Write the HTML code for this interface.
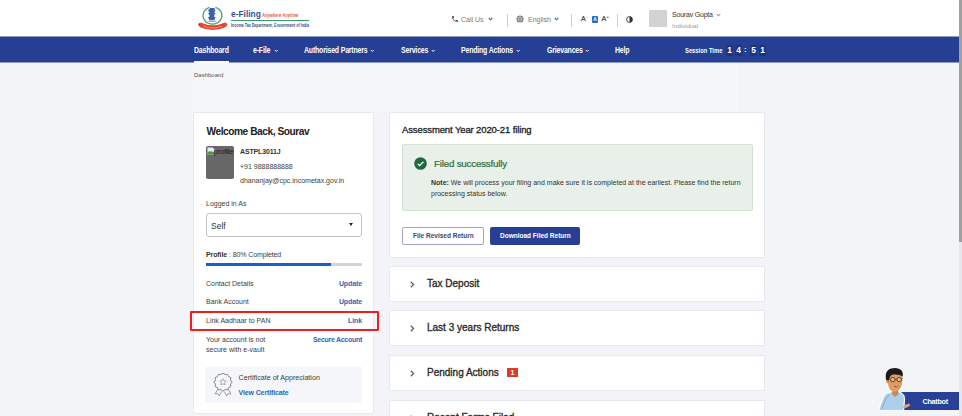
<!DOCTYPE html>
<html><head><meta charset="utf-8">
<style>
*{margin:0;padding:0;box-sizing:border-box}
html,body{width:962px;height:416px;overflow:hidden}
body{background:#f3f4f8;font-family:"Liberation Sans",sans-serif;position:relative;color:#333}
.a{position:absolute;white-space:nowrap}
#hdr{position:absolute;left:0;top:0;width:962px;height:36px;background:#fff}
#nav{position:absolute;left:0;top:36px;width:960px;height:27px;background:linear-gradient(to bottom,#929fc9 0,#929fc9 1px,#253f94 1px,#253f94 26px,#8c99c6 26px,#8c99c6 27px)}
.nv{position:absolute;top:46px;color:#fff;font-size:8.5px;font-weight:bold;line-height:9px;letter-spacing:-0.2px;transform:scaleX(0.815);transform-origin:0 0}
.ch{position:absolute;width:4px;height:4px;border-right:1px solid currentColor;border-bottom:1px solid currentColor;transform:rotate(45deg)}
.card{position:absolute;background:#fff;border:1px solid #e7e9ef;border-radius:1px}
.t7{font-size:7px;line-height:8px;color:#3d3d3d}
.lnk{color:#2c68b2;font-weight:bold;font-size:7px;line-height:8px;letter-spacing:-0.1px}
.acc{position:absolute;left:389px;width:376px;height:36px;background:#fff;border:1px solid #e7e9ef}
.acc .tt{position:absolute;left:37px;top:11px;font-size:10px;line-height:12px;color:#2b2b2b;-webkit-text-stroke:0.35px #2b2b2b}
.acc .ar{position:absolute;left:20px;top:14px;width:5px;height:7px}
.digit{position:absolute;top:45px;width:7px;height:10.5px;background:#1d347f;color:#fff;font-size:8.5px;font-weight:bold;line-height:11px;text-align:center}
</style></head><body>
<div id="hdr"></div>

<!-- logo -->
<svg class="a" style="left:194px;top:3px" width="40" height="30" viewBox="0 0 40 30">
  <path d="M15.6 4.3 A9.4 8.6 0 1 0 21.4 4.3" fill="none" stroke="#44a070" stroke-width="1.3"/>
  <path d="M16.2 5 h4.6 l-0.4 1.5 h0.8 v2 h-0.8 v1.5 h1 l-0.4 1.6 h-0.8 v2.4 h1.2 v1.6 h-0.8 v1.6 h-5.6 v-1.6 h-0.8 v-1.6 h1.2 v-2.4 h-0.8 l-0.4-1.6 h1 v-1.5 h-0.8 v-2 h0.8 z" fill="#3a62ae"/>
  <path d="M14.5 17.8 h8 v1 h-8z" fill="#7a90b8"/>
  <path d="M6.5 19.5 Q18.5 25 31 19.5 L32 24 Q18.5 30 5.5 24 Z" fill="#e2452f"/>
  <path d="M6.5 19.5 L4 21 L5.5 24 Z M31 19.5 L33.5 21 L32 24 Z" fill="#c5301f"/>
  <path d="M9.5 23 Q18.5 26.8 28 23" fill="none" stroke="#f6c9bf" stroke-width="0.9" stroke-dasharray="1.2 0.6"/>
</svg>
<div class="a" id="lg1" style="left:231px;top:9px;font-size:8.4px;line-height:10px;color:#3a5196;font-weight:bold">e-Filing</div>
<div class="a" id="lg2" style="left:262px;top:12.5px;font-size:4.6px;line-height:6px;color:#e65a44;font-style:italic;font-weight:bold;transform:scaleX(0.88);transform-origin:0 0">Anywhere Anytime</div>
<div class="a" style="left:231px;top:20px;width:78px;height:1.2px;background:#3e9c6b"></div>
<div class="a" id="lg3" style="left:231px;top:21.5px;font-size:5px;line-height:6px;color:#33508f;font-weight:bold;transform:scaleX(0.725);transform-origin:0 0">Income Tax Department, Government of India</div>

<!-- header right -->
<svg class="a" style="left:451px;top:15px" width="8" height="8" viewBox="0 0 24 24"><path fill="#555" d="M6.6 10.8c1.4 2.8 3.8 5.1 6.6 6.6l2.2-2.2c.3-.3.7-.4 1-.2 1.1.4 2.3.6 3.6.6.6 0 1 .4 1 1V20c0 .6-.4 1-1 1C10.6 21 3 13.4 3 4c0-.6.4-1 1-1h3.5c.6 0 1 .4 1 1 0 1.2.2 2.4.6 3.6.1.3 0 .7-.2 1L6.6 10.8z"/></svg>
<div class="a" style="left:461px;top:15px;font-size:7px;line-height:9px;color:#777">Call Us</div>
<svg class="a" style="left:487.5px;top:17px" width="5" height="4" viewBox="0 0 5 4"><path d="M0.7 1 L2.5 2.8 L4.3 1" fill="none" stroke="#666" stroke-width="1.1"/></svg>
<div class="a" style="left:507px;top:14px;width:1px;height:13px;background:#d0d0d0"></div>
<svg class="a" style="left:516px;top:15px" width="8" height="8" viewBox="0 0 16 16"><circle cx="8" cy="8" r="7" fill="#666"/><ellipse cx="8" cy="8" rx="2.6" ry="6.6" fill="none" stroke="#fff" stroke-width="1"/><path d="M1.5 6h13M1.5 10h13" stroke="#fff" stroke-width="1"/></svg>
<div class="a" style="left:528px;top:15px;font-size:7px;line-height:9px;color:#777">English</div>
<svg class="a" style="left:554px;top:17px" width="5" height="4" viewBox="0 0 5 4"><path d="M0.7 1 L2.5 2.8 L4.3 1" fill="none" stroke="#666" stroke-width="1.1"/></svg>
<div class="a" style="left:571px;top:14px;width:1px;height:13px;background:#d0d0d0"></div>
<div class="a" style="left:581px;top:15px;font-size:7px;line-height:8px;color:#444;-webkit-text-stroke:0.25px #444">A</div>
<div class="a" style="left:586px;top:14.5px;font-size:4px;line-height:4px;color:#444;font-weight:bold">-</div>
<div class="a" style="left:592px;top:16px;width:6px;height:6.5px;background:#1f6fd1;border-radius:1px;color:#fff;font-size:5px;line-height:6.5px;text-align:center;font-weight:bold">A</div>
<div class="a" style="left:601.5px;top:15px;font-size:7px;line-height:8px;color:#444;-webkit-text-stroke:0.25px #444">A</div>
<div class="a" style="left:606.5px;top:14.5px;font-size:4px;line-height:4px;color:#444;font-weight:bold">+</div>
<div class="a" style="left:617px;top:14px;width:1px;height:13px;background:#d0d0d0"></div>
<svg class="a" style="left:626px;top:16px" width="7" height="7" viewBox="0 0 14 14"><circle cx="7" cy="7" r="5.8" fill="none" stroke="#333" stroke-width="1.8"/><path d="M7 1.2 A5.8 5.8 0 0 1 7 12.8 Z" fill="#333"/></svg>
<div class="a" style="left:649px;top:10px;width:18px;height:17px;background:#d3d3d3;border-radius:1px"></div>
<div class="a" style="left:672px;top:10px;font-size:7px;line-height:9px;color:#333;letter-spacing:-0.2px">Sourav Gupta</div>
<svg class="a" style="left:715.5px;top:13px" width="5" height="4" viewBox="0 0 5 4"><path d="M0.7 1 L2.5 2.8 L4.3 1" fill="none" stroke="#555" stroke-width="0.9"/></svg>
<div class="a" style="left:672px;top:21.8px;font-size:6.2px;line-height:7px;color:#9a9a9a">Individual</div>

<!-- nav -->
<div id="nav"></div>
<div class="nv" style="left:194px">Dashboard</div>
<div class="a" style="left:194px;top:61px;width:35px;height:2px;background:#fff"></div>
<div class="nv" style="left:253px">e-File</div>
<div class="nv" style="left:304px">Authorised Partners</div>
<div class="nv" style="left:401px">Services</div>
<div class="nv" style="left:461px">Pending Actions</div>
<div class="nv" style="left:547px">Grievances</div>
<div class="nv" style="left:615px">Help</div>
<svg class="a" style="left:274px;top:49px" width="5" height="4" viewBox="0 0 5 4"><path d="M0.7 1 L2.2 2.5 L3.7 1" fill="none" stroke="#fff" stroke-width="1"/></svg>
<svg class="a" style="left:370px;top:49px" width="5" height="4" viewBox="0 0 5 4"><path d="M0.7 1 L2.2 2.5 L3.7 1" fill="none" stroke="#fff" stroke-width="1"/></svg>
<svg class="a" style="left:431px;top:49px" width="5" height="4" viewBox="0 0 5 4"><path d="M0.7 1 L2.2 2.5 L3.7 1" fill="none" stroke="#fff" stroke-width="1"/></svg>
<svg class="a" style="left:516px;top:49px" width="5" height="4" viewBox="0 0 5 4"><path d="M0.7 1 L2.2 2.5 L3.7 1" fill="none" stroke="#fff" stroke-width="1"/></svg>
<svg class="a" style="left:585px;top:49px" width="5" height="4" viewBox="0 0 5 4"><path d="M0.7 1 L2.2 2.5 L3.7 1" fill="none" stroke="#fff" stroke-width="1"/></svg>

<div class="a" style="left:685px;top:46px;color:#fff;font-size:7.5px;line-height:9px;font-weight:bold;transform:scaleX(0.775);transform-origin:0 0">Session Time</div>
<div class="digit" style="left:726px">1</div>
<div class="digit" style="left:735px">4</div>
<div class="a" style="left:744px;top:45px;color:#fff;font-size:8px;font-weight:bold;line-height:10px">:</div>
<div class="digit" style="left:750px">5</div>
<div class="digit" style="left:759px">1</div>

<!-- breadcrumb -->
<div class="a" style="left:193px;top:63px;width:545px;height:49px;background:#f5f6f9"></div>
<div class="a" style="left:194px;top:71px;font-size:6px;line-height:8px;color:#555">Dashboard</div>

<!-- left card -->
<div class="card" style="left:193px;top:112px;width:181px;height:302px"></div>
<div class="a" style="left:206.5px;top:126px;font-size:10.2px;line-height:12px;color:#222;font-weight:bold;letter-spacing:-0.46px">Welcome Back, Sourav</div>
<div class="a" style="left:206px;top:146px;width:28px;height:33px;background:#676767;border-radius:2px;overflow:hidden"></div>
<svg class="a" style="left:206.5px;top:147px" width="8" height="8" viewBox="0 0 8 8"><path d="M0.5 0.5 h5 l2 2 v5 h-7z" fill="#e9eef5" stroke="#aab" stroke-width="0.5"/><path d="M0.5 7.5 L0.5 5 Q3 3.5 7.5 5.5 V7.5Z" fill="#4d9a3c"/></svg>
<div class="a" style="left:213.5px;top:147px;font-size:8px;line-height:9px;color:#1e1e1e;letter-spacing:-0.3px">profile</div>
<div class="a" style="left:240px;top:148px;font-size:7px;line-height:8px;color:#333;font-weight:bold;letter-spacing:-0.15px">ASTPL3011J</div>
<div class="a" style="left:240px;top:162.7px;font-size:7px;line-height:8px;color:#3d3d3d">+91 9888888888</div>
<div class="a" style="left:240px;top:177px;font-size:7px;line-height:8px;color:#3d3d3d">dhananjay@cpc.incometax.gov.in</div>
<div class="a" style="left:206px;top:200px;font-size:7px;line-height:8px;color:#3d3d3d">Logged in As</div>
<div class="a" style="left:206px;top:213px;width:156px;height:24px;border:1px solid #c2c2c2;border-radius:3px;background:#fff"></div>
<div class="a" style="left:211px;top:220.5px;font-size:8.5px;line-height:10px;color:#333">Self</div>
<div class="a" style="left:349px;top:223px;width:0;height:0;border-left:2.5px solid transparent;border-right:2.5px solid transparent;border-top:3px solid #222"></div>

<div class="a" style="left:206px;top:250.5px;font-size:7px;line-height:8px;color:#3d3d3d;letter-spacing:-0.1px"><b style="color:#333">Profile</b> : 80% Completed</div>
<div class="a" style="left:206px;top:263px;width:156px;height:3px;background:#d4d4d4"></div>
<div class="a" style="left:206px;top:263px;width:125px;height:3px;background:#1a5fc9"></div>

<div class="a t7" style="left:206px;top:280px">Contact Details</div>
<div class="a lnk" style="right:600px;top:279.5px">Update</div>
<div class="a t7" style="left:206px;top:298px">Bank Account</div>
<div class="a lnk" style="right:600px;top:297.5px">Update</div>
<div class="a" style="left:190px;top:311px;width:189px;height:20px;border:2px solid #f21b20;border-radius:1px"></div>
<div class="a t7" style="left:206px;top:316.6px">Link Aadhaar to PAN</div>
<div class="a lnk" style="right:600px;top:316.5px">Link</div>
<div class="a t7" style="left:206px;top:335.6px">Your account is not</div>
<div class="a t7" style="left:206px;top:345.8px">secure with e-vault</div>
<div class="a lnk" style="right:600px;top:335.5px;letter-spacing:-0.28px">Secure Account</div>

<div class="a" style="left:205px;top:367px;width:157px;height:36px;background:#f5f6f9"></div>
<svg class="a" style="left:213px;top:372px" width="20" height="24" viewBox="0 0 20 24">
  <path d="M10 1 l2 1.6 2.5-.3 1 2.3 2.3 1 -.3 2.5 1.6 2 -1.6 2 .3 2.5 -2.3 1 -1 2.3 -2.5-.3 -2 1.6 -2-1.6 -2.5.3 -1-2.3 -2.3-1 .3-2.5 -1.6-2 1.6-2 -.3-2.5 2.3-1 1-2.3 2.5.3z" fill="none" stroke="#8a8a8a" stroke-width="1"/>
  <path d="M10 6.8 l1 2 2.2.3 -1.6 1.5 .4 2.2 -2-1 -2 1 .4-2.2 -1.6-1.5 2.2-.3z" fill="none" stroke="#999" stroke-width="0.8"/>
  <path d="M5 17 l-3 5 3-.5 1.2 2.5 2.5-4.5 M15 17 l3 5 -3-.5 -1.2 2.5 -2.5-4.5" fill="none" stroke="#999" stroke-width="0.9"/>
</svg>
<div class="a t7" style="left:238.5px;top:374px;font-size:7.15px">Certificate of Appreciation</div>
<div class="a lnk" style="left:238.5px;top:389px;letter-spacing:-0.12px">View Certificate</div>

<!-- right card -->
<div class="card" style="left:389px;top:112px;width:376px;height:146px"></div>
<div class="a" style="left:402px;top:124px;font-size:9.5px;line-height:11px;color:#222;letter-spacing:-0.12px;-webkit-text-stroke:0.3px #222">Assessment Year 2020-21 filing</div>
<div class="a" style="left:402px;top:144px;width:351px;height:67px;background:#e9f0e9;border:1px solid #d3e2d5;border-radius:2px"></div>
<svg class="a" style="left:414px;top:157px" width="13" height="13" viewBox="0 0 13 13"><circle cx="6.5" cy="6.5" r="6.3" fill="#1d6b3b"/><path d="M3.7 6.7 l1.9 1.9 3.8-3.8" fill="none" stroke="#fff" stroke-width="1.3"/></svg>
<div class="a" style="left:434px;top:158px;font-size:9.8px;line-height:11px;color:#2a6e40;letter-spacing:-0.22px;-webkit-text-stroke:0.2px #2a6e40">Filed successfully</div>
<div class="a" style="left:431px;top:178px;font-size:7px;line-height:10.5px;color:#333;white-space:normal;width:330px"><b>Note:</b> We will process your filing and make sure it is completed at the earliest. Please find the return processing status below.</div>
<div class="a" style="left:402px;top:227px;width:82px;height:18px;border:1.5px solid #a0a5bc;border-radius:2px;background:#fff"></div>
<div class="a" style="left:413px;top:232px;font-size:6.5px;line-height:8px;color:#3b4470;font-weight:bold">File Revised Return</div>
<div class="a" style="left:490px;top:227px;width:90px;height:18px;background:#293f94;border-radius:2px"></div>
<div class="a" style="left:500px;top:232px;font-size:6.5px;line-height:8px;color:#fff;font-weight:bold">Download Filed Return</div>

<!-- accordions -->
<div class="acc" style="top:266px"><svg class="ar" viewBox="0 0 5 7"><path d="M0.8 0.8 L3.6 3.5 L0.8 6.2" fill="none" stroke="#5a5a5a" stroke-width="1.2"/></svg><div class="tt">Tax Deposit</div></div>
<div class="acc" style="top:310px"><svg class="ar" viewBox="0 0 5 7"><path d="M0.8 0.8 L3.6 3.5 L0.8 6.2" fill="none" stroke="#5a5a5a" stroke-width="1.2"/></svg><div class="tt">Last 3 years Returns</div></div>
<div class="acc" style="top:355px"><svg class="ar" viewBox="0 0 5 7"><path d="M0.8 0.8 L3.6 3.5 L0.8 6.2" fill="none" stroke="#5a5a5a" stroke-width="1.2"/></svg><div class="tt">Pending Actions</div><div class="a" style="left:117px;top:12px;width:11px;height:9px;background:#d93a2b;color:#fff;font-size:7px;line-height:9px;text-align:center;font-weight:bold">1</div></div>
<div class="acc" style="top:400px"><svg class="ar" viewBox="0 0 5 7"><path d="M0.8 0.8 L3.6 3.5 L0.8 6.2" fill="none" stroke="#5a5a5a" stroke-width="1.2"/></svg><div class="tt">Recent Forms Filed</div></div>

<!-- chatbot -->
<div class="a" style="left:901px;top:391.5px;width:59px;height:18px;background:#2a3f96;border-radius:1px"></div>
<div class="a" style="left:922.5px;top:397px;font-size:7.2px;line-height:9px;color:#fff;font-weight:bold;letter-spacing:-0.25px">Chatbot</div>
<svg class="a" style="left:874px;top:364px" width="40" height="50" viewBox="0 0 40 50">
  <g stroke="#fff" stroke-width="2.2" stroke-linejoin="round" fill="#fff">
  <path d="M12 30 C9 34 7 40 5.5 46 L29 46 L29.5 43 L30 36 L29.5 32 C28 29.5 26 28.5 24 28 L18 28 Z"/>
  <path d="M12 15 C11 7 15 4.5 21 4.5 C27 4.5 29.5 8 28.5 13 L28 20 C27 25 24 28 20.5 27.8 C16.5 27.5 14 24 13.5 19 Z"/>
  </g>
  <path d="M12 30 C9 34 7 40 5.5 46 L29 46 L30 36 L29.5 32 C28 29.5 26 28.5 24 28 L18 28 Z" fill="#abd0ec"/>
  <path d="M8 45 C9.5 39 12 34 15 31" stroke="#7fa9d3" stroke-width="1" fill="none"/>
  <path d="M29 42.5 L32 40.5 L35.2 39.6 L36 41.6 L33.5 43.2 L29.5 44.5 Z" fill="#e6a06a"/>
  <path d="M18.5 26 L24 26 L24.5 30 L21 33 L18 30 Z" fill="#cf8550"/>
  <path d="M14 14 C14 10 17 9 21.5 9 C26 9 28.5 11 28.5 14 L28 20 C27 25 24 28 20.5 27.8 C16.5 27.5 14.2 24 14 19 Z" fill="#e39a5e"/>
  <ellipse cx="13.8" cy="17" rx="1.6" ry="2.4" fill="#d88c52"/>
  <path d="M12 16 C10.5 6.5 15 4 21 4 C27 4 30 7.5 28.6 12.8 C26 10.5 22 10 17.5 11 C16 12 15.5 14 15 16.5 Z" fill="#1b1b1b"/>
  <circle cx="18.8" cy="15.6" r="2.2" fill="rgba(255,255,255,0.25)" stroke="#2a2a2a" stroke-width="0.75"/>
  <circle cx="25.2" cy="15.6" r="2.2" fill="rgba(255,255,255,0.25)" stroke="#2a2a2a" stroke-width="0.75"/>
  <path d="M21 15.3 L23 15.3 M27.4 15.1 L28.8 14.6" stroke="#2a2a2a" stroke-width="0.6"/>
  <path d="M20 22 Q22.5 23.8 24.5 21.6" stroke="#6e2f10" stroke-width="0.8" fill="#f4f0ea"/>
</svg>

<!-- scrollbar line -->
<div class="a" style="left:959px;top:0;width:3px;height:242px;background:#a0a0a0"></div>
<div class="a" style="left:959px;top:242px;width:3px;height:174px;background:#e6e6ec"></div>
</body></html>
